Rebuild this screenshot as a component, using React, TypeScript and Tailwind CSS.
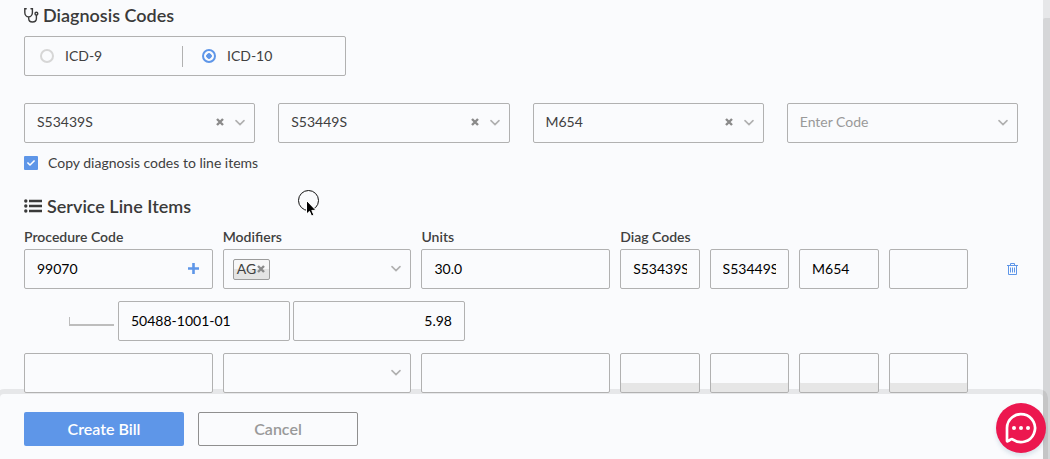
import type { ReactNode } from 'react';
import { FaCheck } from 'react-icons/fa';

const fieldBase =
  'relative z-10 h-10 w-full min-w-0 rounded-[2px] border border-[#b1b1b1] bg-[#fafbfd] px-3 pb-[2px] text-sm outline-none';
const field = `${fieldBase} text-black`;

function Chevron() {
  return (
    <svg className="block h-2 w-[10px]" viewBox="0 0 10 8" fill="none" stroke="#b0b0b0" strokeWidth="1.6" strokeLinecap="round" aria-hidden="true">
      <path d="M1 1.600 5 5.600 9 1.600" />
    </svg>
  );
}

function Cross() {
  return (
    <svg className="block h-2 w-2" viewBox="0 0 8 8" fill="none" stroke="#8a8a8a" strokeWidth="2.400" aria-hidden="true">
      <path d="M1 1l6 6M7 1 1 7" />
    </svg>
  );
}

function CodeSelect({ label, value }: { label: string; value?: string }) {
  return (
    <div className="relative">
      <select
        aria-label={label}
        defaultValue={value ?? ''}
        className={value ? `${fieldBase} appearance-none text-[#404040]` : `${fieldBase} appearance-none text-[#999999]`}
      >
        {value ? <option value={value}>{value}</option> : <option value="">Enter Code</option>}
      </select>
      {value && (
        <button type="button" aria-label={`Clear ${value}`} className="absolute right-[31px] top-[15px] z-20">
          <Cross />
        </button>
      )}
      <span className="pointer-events-none absolute right-[10px] top-[16px] z-20">
        <Chevron />
      </span>
    </div>
  );
}

function Modifiers({ label, chip }: { label: string; chip?: string }) {
  return (
    <div className="relative z-10 flex h-10 items-center gap-1 rounded-[2px] border border-[#b1b1b1] bg-[#fafbfd] pl-[9px]">
      {chip && (
        <span className="flex h-[21px] items-center rounded-[2px] border border-[#9c9c9c] bg-linear-to-b from-[#f7f7f8] from-50% to-[#e4e4e4] to-50% px-[3px] text-sm text-[#404040]">
          {chip}
          <button type="button" aria-label={`Remove ${chip}`} className="px-px">
            <Cross />
          </button>
        </span>
      )}
      <select aria-label={label} className="h-full min-w-0 flex-1 appearance-none bg-transparent outline-none" defaultValue="">
        <option value=""></option>
      </select>
      <span className="pointer-events-none absolute right-[9px] top-[15px]">
        <Chevron />
      </span>
    </div>
  );
}

function Heading({ icon, children }: { icon: ReactNode; children: ReactNode }) {
  return (
    <h2 className="flex h-6 items-center gap-1 text-lg font-semibold text-[#3a3a3a]">
      {icon}
      {children}
    </h2>
  );
}

const row = 'grid grid-cols-[repeat(3,19fr)_repeat(4,8fr)_40px] gap-x-[10px] items-center';
const diag = ['S53439S', 'S53449S', 'M654', ''];

export default function App() {
  return (
    <div className="relative flex min-h-screen flex-col overflow-hidden bg-[#fafbfd] font-['Lato','Liberation_Sans',sans-serif] text-sm text-[#404040]">
      <main className="pb-px pl-6 pr-8 pt-[3px]">
        <Heading
          icon={
            <svg className="h-[15px] w-[15px]" viewBox="0 0 15 15" fill="none" stroke="currentColor" strokeWidth="1.4" strokeLinecap="round" aria-hidden="true">
              <path d="M2.200 .8H.8v3.700C.8 7 2.500 8.900 4.600 8.900S8.400 7 8.400 4.500V.8H7M4.700 8.900V10.500c0 2.200 1.500 3.500 3.700 3.500s4-1.300 4-3.500V7.200" />
              <circle cx="12.400" cy="5.700" r="1.400" />
            </svg>
          }
        >
          Diagnosis Codes
        </Heading>

        <fieldset aria-label="Code set" className="mt-[9px] flex h-10 w-[322px] items-center rounded-[2px] border border-[#b1b1b1]">
          <label className="flex h-[21px] w-[158px] items-center gap-[11px] border-r border-[#b1b1b1] pl-[15px]">
            <input type="radio" name="icd" className="h-[14px] w-[14px] appearance-none rounded-full border-2 border-[#d6d6d6]" />
            ICD-9
          </label>
          <label className="flex items-center gap-[11px] pl-[19px]">
            <input
              type="radio"
              name="icd"
              defaultChecked
              className="h-[14px] w-[14px] appearance-none rounded-full border-2 border-[#5e96e8] bg-[radial-gradient(circle,#5e96e8_2.5px,transparent_3px)]"
            />
            ICD-10
          </label>
        </fieldset>

        <div className="mt-[27px] grid grid-cols-4 gap-[23px]">
          <CodeSelect label="Diagnosis code 1" value="S53439S" />
          <CodeSelect label="Diagnosis code 2" value="S53449S" />
          <CodeSelect label="Diagnosis code 3" value="M654" />
          <CodeSelect label="Diagnosis code 4" />
        </div>

        <label className="mt-[10px] flex h-5 w-fit items-center gap-[10px]">
          <span className="relative flex">
            <input type="checkbox" defaultChecked className="h-[14px] w-[14px] appearance-none rounded-[1px] bg-[#5e96e8]" />
            <FaCheck className="pointer-events-none absolute left-[3px] top-[3px] h-2 w-2 text-white" />
          </span>
          Copy diagnosis codes to line items
        </label>

        <div className="mt-[21px]">
          <Heading
            icon={
              <svg className="mr-px h-[14px] w-[18px]" viewBox="0 0 18 14" fill="currentColor" aria-hidden="true">
                <circle cx="1.800" cy="2" r="1.700" />
                <circle cx="1.800" cy="7" r="1.700" />
                <circle cx="1.800" cy="12" r="1.700" />
                <path d="M5 .8h13v2.400H5zM5 5.800h13v2.400H5zM5 10.800h13v2.400H5z" />
              </svg>
            }
          >
            Service Line Items
          </Heading>
        </div>

        <div className={`${row} mt-[9px] h-5 font-semibold`}>
          <label htmlFor="procedure">Procedure Code</label>
          <span>Modifiers</span>
          <label htmlFor="units">Units</label>
          <span className="col-span-4">Diag Codes</span>
        </div>

        <div className={`${row} mt-[2px]`}>
          <div className="relative">
            <input id="procedure" defaultValue="99070" className={field} />
            <button type="button" aria-label="Add procedure" className="absolute right-[14px] top-[14px] z-20 h-[11px] w-[11px]">
              <svg viewBox="0 0 11 11" className="block" stroke="#5e96e8" strokeWidth="2.600" aria-hidden="true">
                <path d="M5.500 0v11M0 5.500h11" />
              </svg>
            </button>
          </div>
          <Modifiers label="Modifiers" chip="AG" />
          <input id="units" defaultValue="30.0" className={field} />
          {diag.map((d, i) => (
            <input key={i} aria-label={`Diag code ${i + 1}`} defaultValue={d} className={field} />
          ))}
          <button type="button" aria-label="Delete line" className="h-3 w-[11px] justify-self-end">
            <svg viewBox="0 0 11 12" className="block" fill="none" stroke="#5e96e8" aria-hidden="true">
              <path d="M0 2.500h11M3.500 2V.5h4V2M1.500 2.500v9h8v-9M3.500 4.500v5M5.500 4.500v5M7.500 4.500v5" />
            </svg>
          </button>
        </div>

        <div className="mt-3 flex items-center gap-[3px] pl-[45px]">
          <span className="mr-px h-[9px] w-[45px] border-b-2 border-l border-[#bdbdbd]" />
          <input aria-label="Drug code" defaultValue="50488-1001-01" className={`${field} max-w-[172px]`} />
          <input aria-label="Drug charge" defaultValue="5.98" className={`${field} max-w-[172px] text-right`} />
        </div>

        <div className={`${row} mt-3`}>
          <input aria-label="New procedure code" className={field} />
          <Modifiers label="New modifiers" />
          <input aria-label="New units" className={field} />
          {diag.map((_, i) => (
            <input
              key={i}
              aria-label={`New diag code ${i + 1}`}
              className={`${field} shadow-[inset_0_-9px_0_#e6e6e6]`}
            />
          ))}
        </div>
      </main>

      <footer className="mr-[7px] flex flex-1 gap-[14px] rounded-t-[4px] bg-[#fafbfd] pb-[13px] pl-6 pt-[18px] text-base font-semibold shadow-[0_0_0_5px_rgba(0,0,0,0.08)]">
        <button type="button" className="h-[34px] w-40 rounded-[2px] bg-[#5e96e8] pb-px text-white">
          Create Bill
        </button>
        <button type="button" className="h-[34px] w-40 rounded-[2px] border border-[#8f8f8f] pb-px text-[#999999]">
          Cancel
        </button>
      </footer>

      <div className="pointer-events-none absolute inset-y-0 right-0 z-20 w-[7px] bg-black/8 pt-[18px]">
        <div className="h-full rounded-tl-[2px] bg-black/7" />
      </div>

      <svg className="pointer-events-none absolute left-[297px] top-[190px] z-30 h-[28px] w-[24px]" viewBox="0 0 24 28" aria-hidden="true">
        <circle cx="11.500" cy="10.500" r="10" fill="none" stroke="#111" />
        <path d="M9.500 10.500v13.600l3-2.800 2.100 4.800 2.300-1-2.100-4.700h4.200z" fill="#000" stroke="#fff" strokeWidth="1" />
      </svg>

      <button type="button" aria-label="Open chat" className="fixed bottom-[6px] right-1 z-30 h-[50px] w-[50px] rounded-full bg-[#ec174f] shadow-[0_3px_4px_rgba(90,130,160,0.2)]">
        <svg viewBox="0 0 50 50" className="block" fill="none" aria-hidden="true">
          <path d="M11 38V25a14 14 0 1 1 6 11.600c-1.500-1.200-3 .2-4.200 1.200-.8.700-1.800.6-1.800.2Z" stroke="#fff" strokeWidth="2.700" strokeLinejoin="round" />
          <g fill="#fff">
            <circle cx="18" cy="25" r="2" />
            <circle cx="25" cy="25" r="2" />
            <circle cx="32" cy="25" r="2" />
          </g>
        </svg>
      </button>
    </div>
  );
}
